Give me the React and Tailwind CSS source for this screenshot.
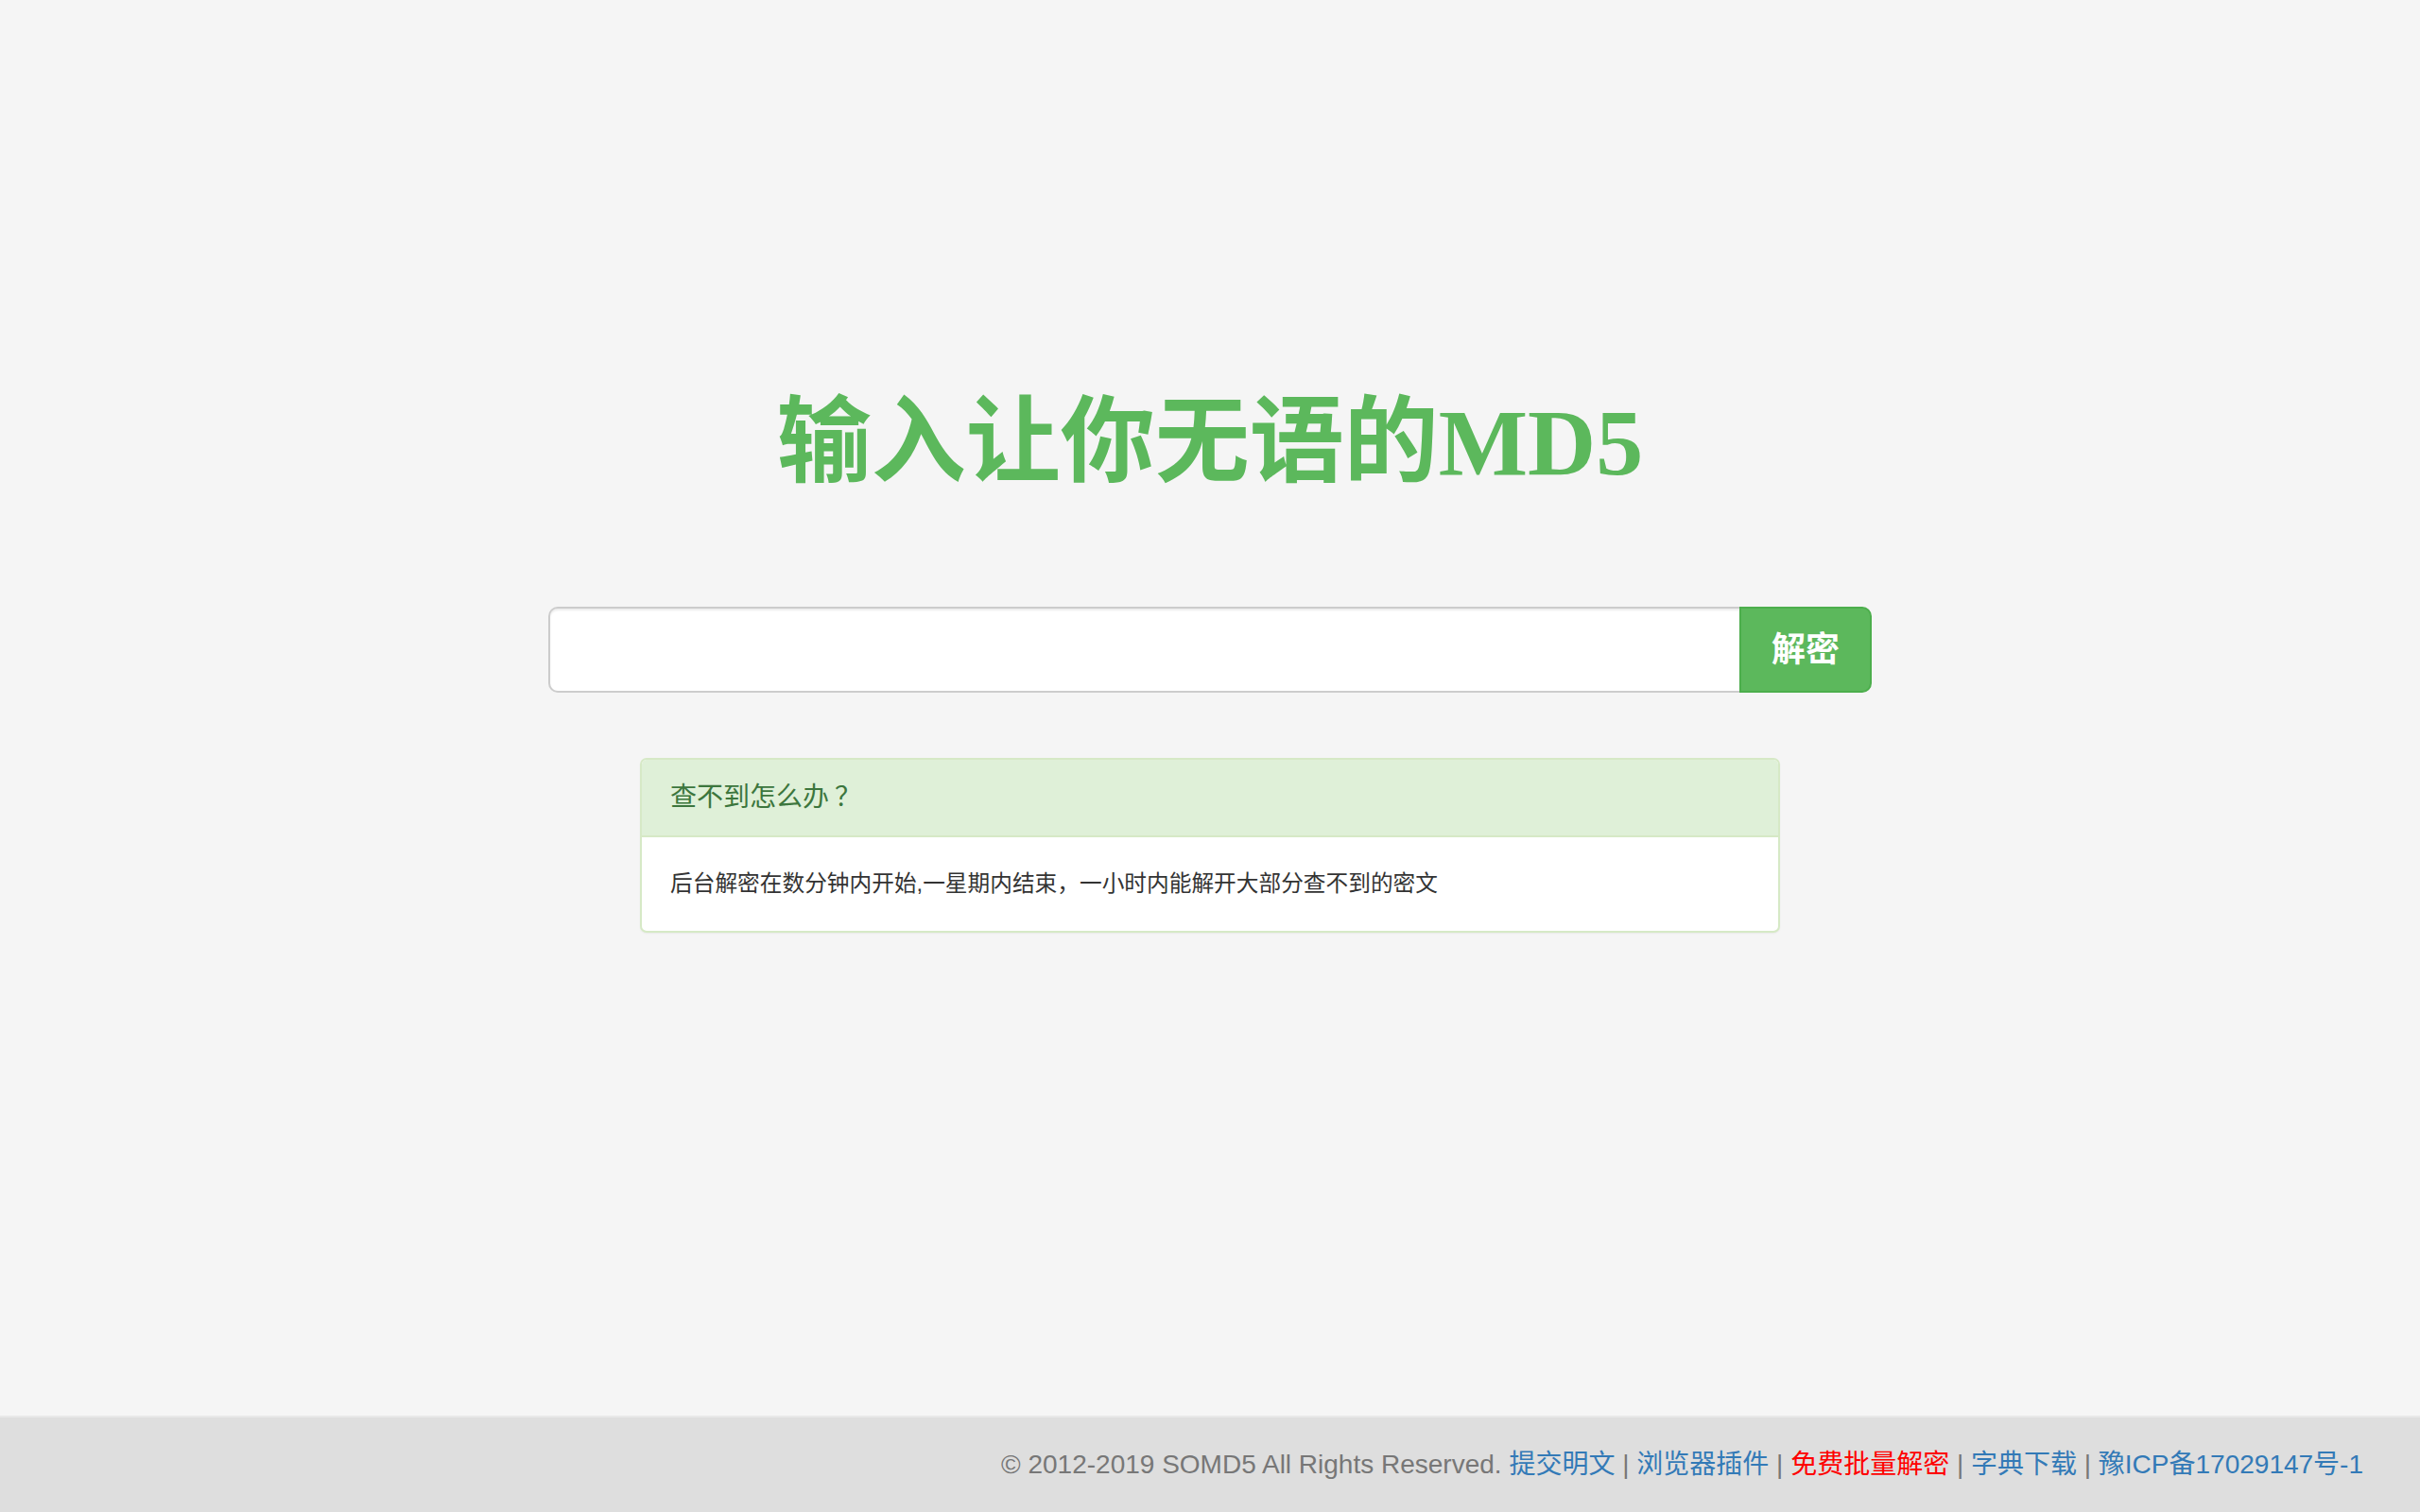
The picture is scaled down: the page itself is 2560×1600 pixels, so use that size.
import React, { useState } from 'react'

const sans = { fontFamily: '"Liberation Sans", "Noto Sans CJK SC", sans-serif' }

const App = () => {
  const [hash, setHash] = useState('')

  return (
    <div className='min-h-screen flex flex-col bg-[#f5f5f5]' style={sans}>
      <main className='flex-1 flex flex-col items-center pt-[409px]'>
        <h1
          className='text-[100px] leading-[1.2] font-bold text-[#5cb85c] text-center'
          style={{ fontFamily: '"Liberation Serif", "Noto Sans CJK SC", serif' }}
        >
          输入让你无语的MD5
        </h1>

        <form
          className='flex w-[1400px] h-[91px] mt-[113px]'
          onSubmit={(e) => e.preventDefault()}
        >
          <input
            type='text'
            value={hash}
            onChange={(e) => setHash(e.target.value)}
            className='flex-1 h-full bg-white border-2 border-r-0 border-[#cccccc] rounded-l-[10px] px-5 text-[26px] text-[#555] outline-none shadow-[inset_0_2px_2px_rgba(0,0,0,0.075)]'
          />
          <button
            type='submit'
            className='w-[140px] h-full bg-[#5cb85c] border-2 border-[#4cae4c] rounded-r-[10px] text-white text-[36px] font-bold'
          >
            解密
          </button>
        </form>

        <div className='w-[1206px] mt-[69px] bg-white border-2 border-[#d6e9c6] rounded-[7px] overflow-hidden shadow-[0_1px_2px_rgba(0,0,0,0.05)]'>
          <div className='h-[82px] flex items-center pl-[30px] bg-[#dff0d8] border-b-2 border-[#d6e9c6] text-[#3c763d] text-[28px]'>
            查不到怎么办<span className='inline-block w-[1em] pl-[6px]'>？</span>
          </div>
          <div className='h-[99px] flex items-center pl-[30px] text-[#333] text-[23.7px]'>
            后台解密在数分钟内开始,一星期内结束，一小时内能解开大部分查不到的密文
          </div>
        </div>
      </main>

      <footer className='h-[102px] bg-[#dedede] border-t-2 border-[#e8e8e8] flex items-center justify-end pr-[60px] text-[28px] text-[#777]'>
        <p>
          © 2012-2019 SOMD5 All Rights Reserved.{' '}
          <a href='#' className='text-[#337ab7]'>提交明文</a> |{' '}
          <a href='#' className='text-[#337ab7]'>浏览器插件</a> |{' '}
          <a href='#' className='text-[#ff0000]'>免费批量解密</a> |{' '}
          <a href='#' className='text-[#337ab7]'>字典下载</a> |{' '}
          <a href='#' className='text-[#337ab7]'>豫ICP备17029147号-1</a>
        </p>
      </footer>
    </div>
  )
}

export default App
